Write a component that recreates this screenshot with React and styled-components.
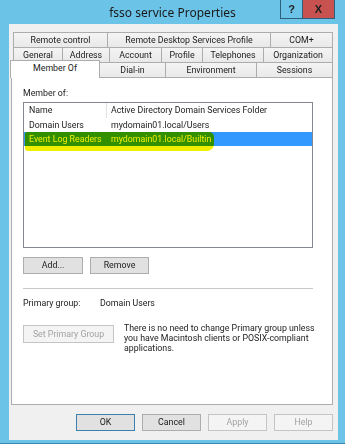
import React from 'react';
import styled, { createGlobalStyle } from 'styled-components';

const GlobalStyle = createGlobalStyle`
  html, body {
    margin: 0;
    padding: 0;
  }
  body {
    font-family: Roboto, "Liberation Sans", sans-serif;
    font-size: 8.8px;
    color: #1b1b1b;
  }
`;

// Window frame
const Window = styled.div`
  width: 345px;
  height: 444px;
  box-sizing: border-box;
  background: #6bc3e7;
  border-bottom: 1px solid #3f87ad;
  display: flex;
  flex-direction: column;
`;

const TitleBar = styled.div`
  height: 24px;
  flex: none;
  display: grid;
  grid-template-columns: 70px 1fr 70px;
`;

const Title = styled.div`
  grid-column: 2;
  text-align: center;
  font-family: "Noto Sans", sans-serif;
  font-size: 12px;
  line-height: 26px;
  color: #1a1a1a;
`;

const Caption = styled.div`
  grid-column: 3;
  justify-self: end;
  align-self: start;
  display: flex;
  margin-right: 10px;
`;

const CaptionButton = styled.div`
  width: ${(p) => (p.$close ? 33 : 23)}px;
  height: 19px;
  box-sizing: border-box;
  border: 1px solid #2d5f7a;
  border-top: none;
  margin-left: -1px;
  background: ${(p) => (p.$close ? '#c75250' : '#6bc3e7')};
  font-family: "Liberation Sans", sans-serif;
  font-weight: bold;
  font-size: 11px;
  line-height: 18px;
  text-align: center;
  color: #1e1e1e;
`;

const Client = styled.div`
  flex: 1;
  margin: 0 7px 3px 9px;
  padding: 8px 5px 0 2px;
  background: #f0f0f0;
  display: flex;
  flex-direction: column;
`;

// Tabs
const TabRow = styled.div`
  display: flex;
  height: 15px;
  padding-left: ${(p) => p.$indent || 0}px;
`;

const Tab = styled.div`
  flex: none;
  width: ${(p) => p.$w}px;
  box-sizing: border-box;
  margin-right: -1px;
  border: 1px solid #adadad;
  border-bottom: none;
  background: linear-gradient(#f4f4f4, #e9e9e9);
  line-height: 14px;
  text-align: center;
  white-space: nowrap;
`;

const ActiveTab = styled(Tab)`
  position: relative;
  z-index: 1;
  height: 18px;
  margin-top: -2px;
  margin-left: -1px;
  background: #fff;
  line-height: 15px;
`;

const Panel = styled.div`
  flex: none;
  height: 328px;
  box-sizing: border-box;
  background: #fff;
  border: 1px solid #adadad;
  padding: 9px 19px 0 11px;
  display: flex;
  flex-direction: column;
`;

const Label = styled.div`
  line-height: 12px;
`;

// List view
const List = styled.div`
  margin-top: 3px;
  height: 146px;
  box-sizing: border-box;
  border: 1px solid #828790;
  background: #fff;
`;

const Row = styled.div`
  position: relative;
  display: grid;
  grid-template-columns: 83px 1fr;
  height: 14px;
  line-height: 14px;
  white-space: nowrap;
  background: ${(p) => (p.$selected ? '#3399ff' : 'transparent')};
  color: ${(p) => (p.$selected ? '#fff' : '#1b1b1b')};
`;

const HeaderRow = styled(Row)`
  height: 15px;
  line-height: 15px;
`;

const Cell = styled.div`
  padding-left: ${(p) => (p.$first ? 5 : 4)}px;
  border-right: ${(p) => (p.$divider ? '1px solid #e3e3e3' : 'none')};
`;

const Marker = styled.span`
  position: absolute;
  left: 1px;
  top: 0;
  width: 189px;
  height: 19px;
  background: #f1ef00;
  mix-blend-mode: multiply;
  border-radius: 2px 5px 7px 3px;
`;

// Buttons
const ButtonRow = styled.div`
  display: flex;
  gap: 7px;
  margin-top: 9px;
`;

const Button = styled.div`
  flex: none;
  width: ${(p) => p.$w || 59}px;
  height: ${(p) => p.$h || 17}px;
  box-sizing: border-box;
  border: 1px solid ${(p) => (p.$default ? '#3c7fb1' : p.$disabled ? '#c4c4c4' : '#adadad')};
  background: ${(p) => (p.$disabled ? '#f4f4f4' : '#e1e1e1')};
  color: ${(p) => (p.$disabled ? '#a3a3a3' : '#1b1b1b')};
  line-height: ${(p) => (p.$h || 17) - 2}px;
  text-align: center;
  white-space: nowrap;
  margin-top: ${(p) => p.$top || 0}px;
`;

const Separator = styled.div`
  height: 1px;
  background: #c9c9c9;
  margin-top: 14px;
`;

const InfoRow = styled.div`
  display: flex;
  margin-top: 8px;
  line-height: 12px;
`;

const InfoKey = styled.div`
  width: 77px;
`;

const PrimaryRow = styled.div`
  display: flex;
  gap: 10px;
  margin-top: 14px;
`;

const Note = styled.div`
  line-height: 10px;
  white-space: nowrap;
`;

const Footer = styled.div`
  display: flex;
  justify-content: flex-end;
  gap: 7px;
  margin-top: 9px;
`;

const topTabs = [
  { label: 'Remote control', w: 95 },
  { label: 'Remote Desktop Services Profile', w: 164 },
  { label: 'COM+', w: 63 },
];

const midTabs = [
  { label: 'General', w: 50 },
  { label: 'Address', w: 48 },
  { label: 'Account', w: 53 },
  { label: 'Profile', w: 42 },
  { label: 'Telephones', w: 62 },
  { label: 'Organization', w: 70 },
];

const lowTabs = [
  { label: 'Dial-in', w: 67 },
  { label: 'Environment', w: 92 },
  { label: 'Sessions', w: 77 },
];

export default function App() {
  return (
    <>
      <GlobalStyle />
      <Window>
        <TitleBar>
          <Title>fsso service Properties</Title>
          <Caption>
            <CaptionButton>?</CaptionButton>
            <CaptionButton $close>X</CaptionButton>
          </Caption>
        </TitleBar>
        <Client>
          <TabRow $indent={2}>
            {topTabs.map((t) => (
              <Tab key={t.label} $w={t.w}>{t.label}</Tab>
            ))}
          </TabRow>
          <TabRow $indent={2}>
            {midTabs.map((t) => (
              <Tab key={t.label} $w={t.w}>{t.label}</Tab>
            ))}
          </TabRow>
          <TabRow>
            <ActiveTab $w={90}>Member Of</ActiveTab>
            {lowTabs.map((t) => (
              <Tab key={t.label} $w={t.w}>{t.label}</Tab>
            ))}
          </TabRow>
          <Panel>
            <Label>Member of:</Label>
            <List>
              <HeaderRow>
                <Cell $first $divider>Name</Cell>
                <Cell>Active Directory Domain Services Folder</Cell>
              </HeaderRow>
              <Row>
                <Cell $first>Domain Users</Cell>
                <Cell>mydomain01.local/Users</Cell>
              </Row>
              <Row $selected>
                <Cell $first>Event Log Readers</Cell>
                <Cell>mydomain01.local/Builtin</Cell>
                <Marker />
              </Row>
            </List>
            <ButtonRow>
              <Button $w={60}>Add...</Button>
              <Button>Remove</Button>
            </ButtonRow>
            <Separator />
            <InfoRow>
              <InfoKey>Primary group:</InfoKey>
              <div>Domain Users</div>
            </InfoRow>
            <PrimaryRow>
              <Button $w={91} $h={18} $top={2} $disabled>Set Primary Group</Button>
              <Note>
                There is no need to change Primary group unless<br />
                you have Macintosh clients or POSIX-compliant<br />
                applications.
              </Note>
            </PrimaryRow>
          </Panel>
          <Footer>
            <Button $default>OK</Button>
            <Button>Cancel</Button>
            <Button $disabled>Apply</Button>
            <Button $disabled>Help</Button>
          </Footer>
        </Client>
      </Window>
    </>
  );
}
